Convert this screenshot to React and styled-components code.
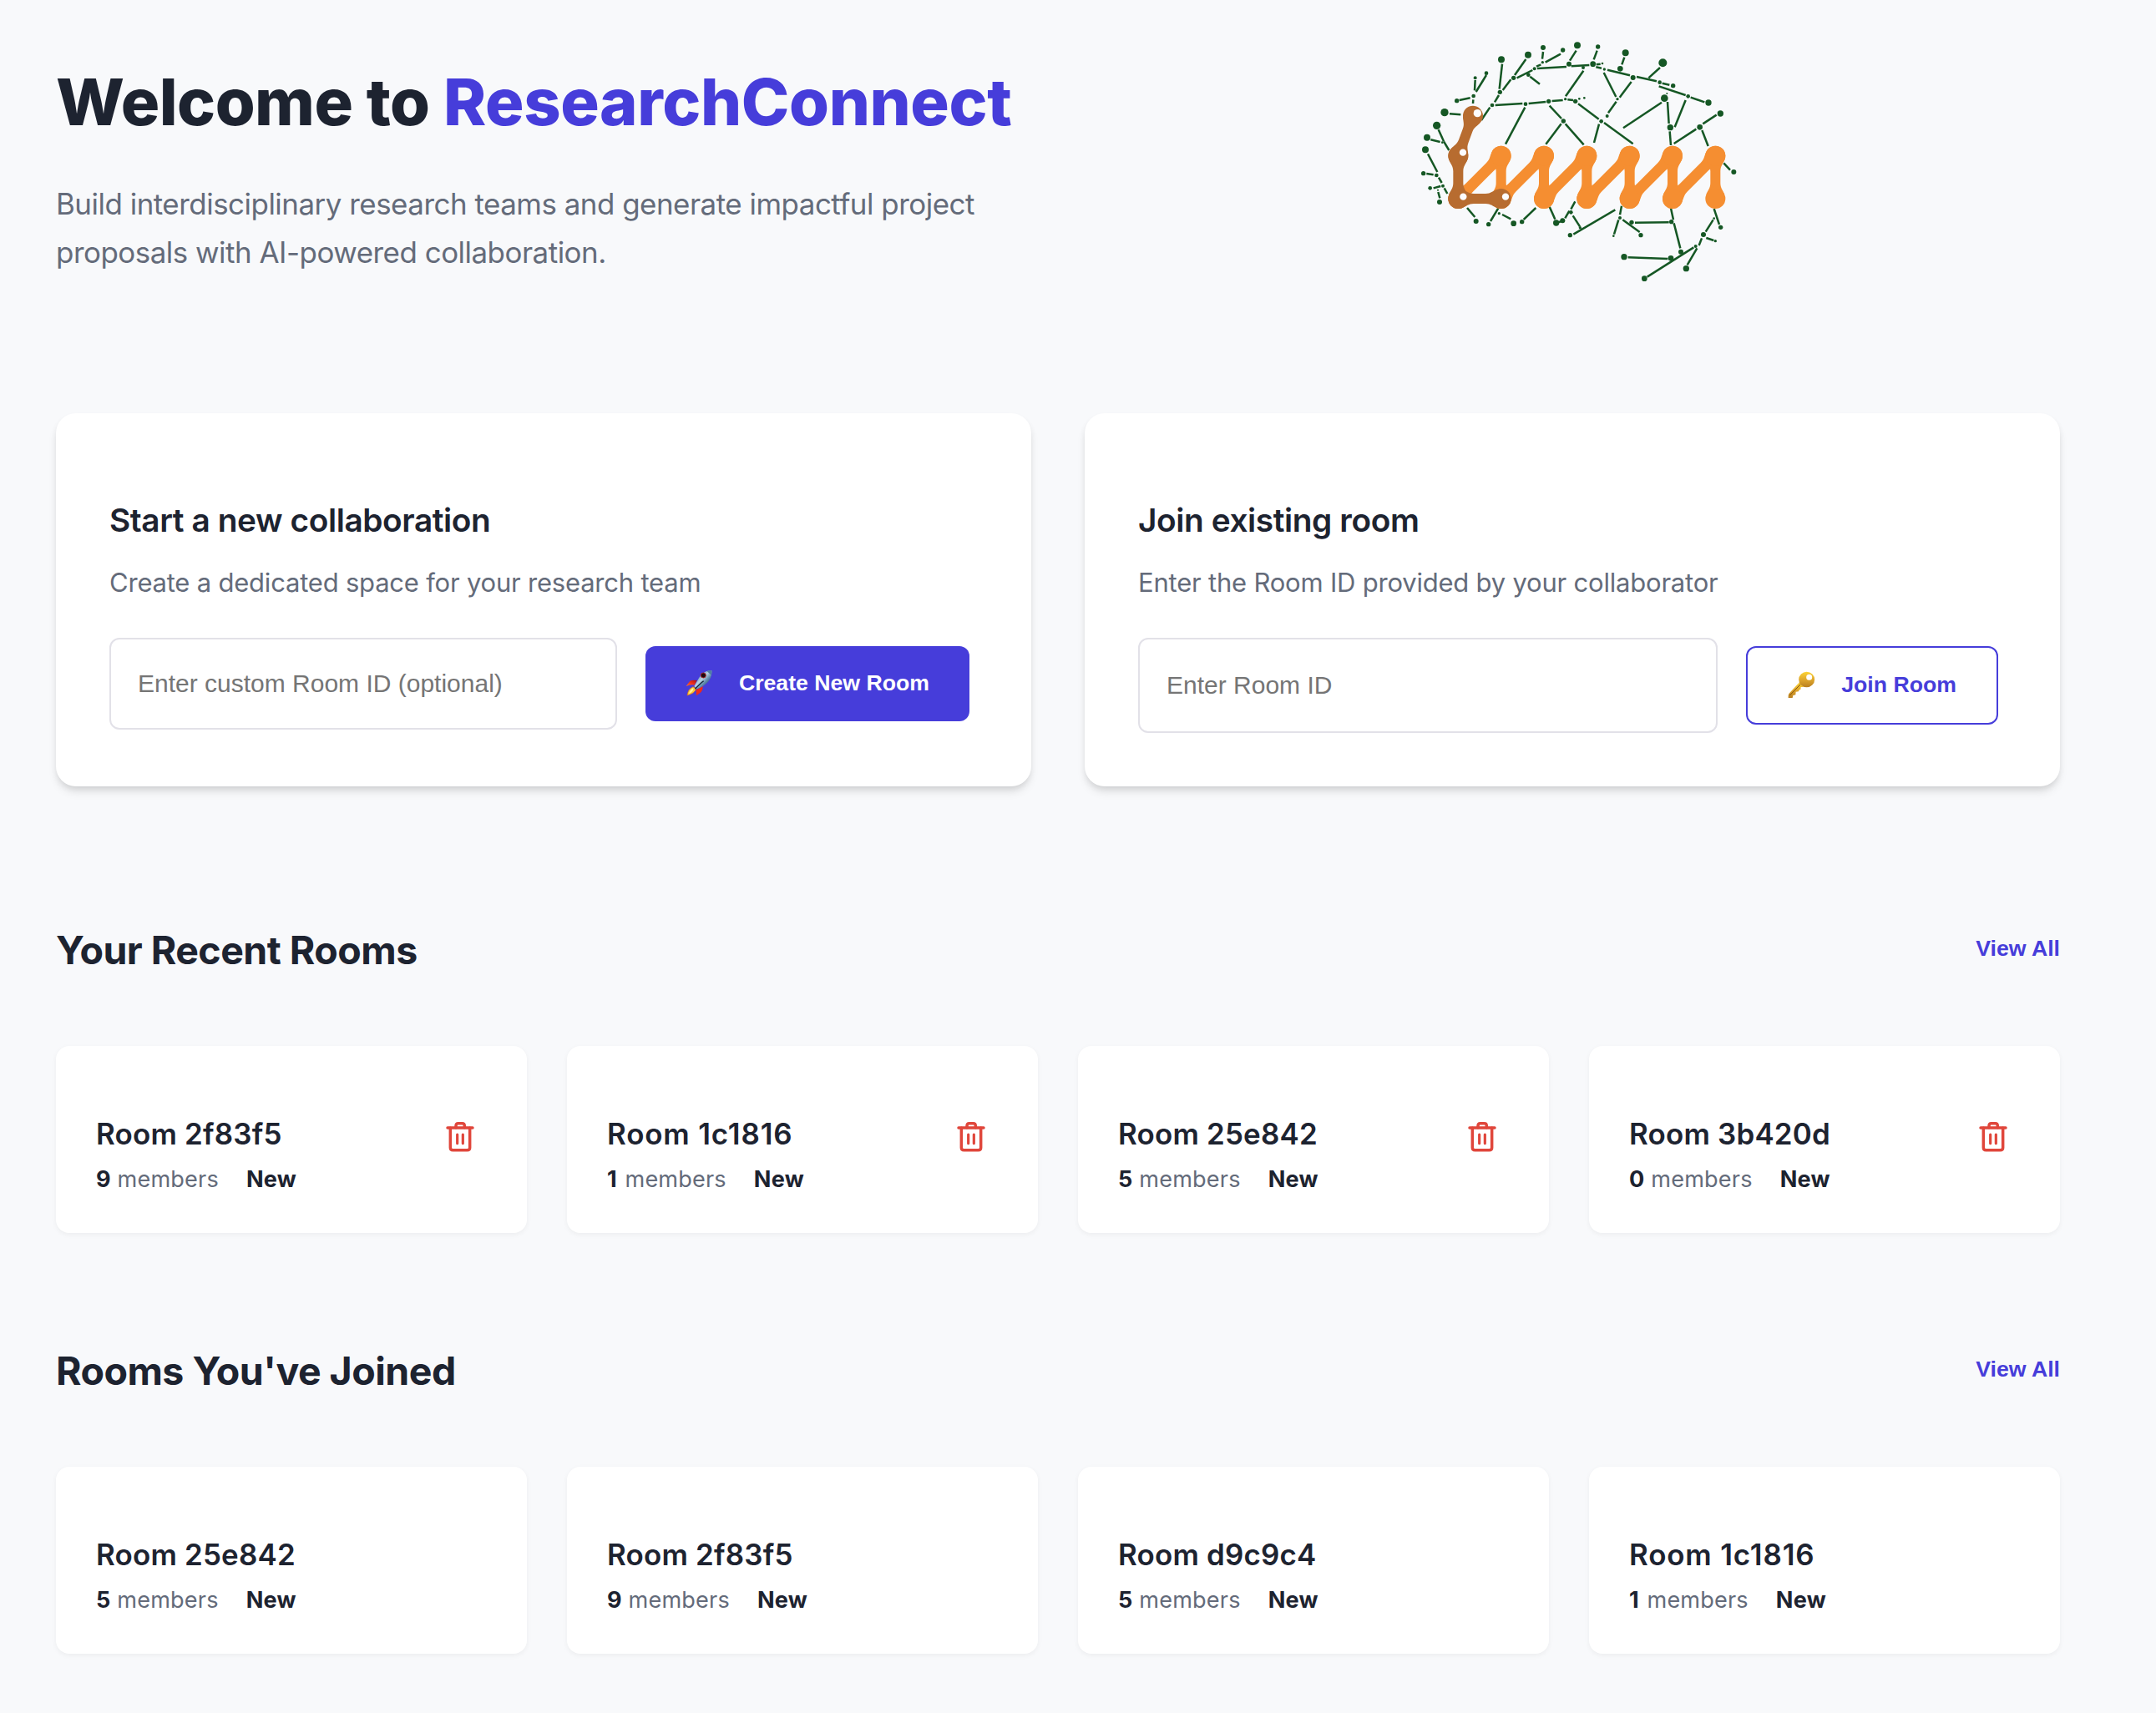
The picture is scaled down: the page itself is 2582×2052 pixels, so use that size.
import React from 'react';
import styled, { createGlobalStyle } from 'styled-components';

const color = {
  page: '#f8f9fb',
  card: '#ffffff',
  ink: '#1d2330',
  muted: '#646b7a',
  primary: '#463dda',
  border: '#e2e1e8',
  danger: '#e0463b',
  green: '#155724',
  orange: '#f58e31',
  brown: '#b76c30',
};

const GlobalStyle = createGlobalStyle`
  *, *::before, *::after { box-sizing: border-box; }
  body {
    margin: 0;
    background: ${color.page};
    color: ${color.ink};
    font-family: Inter, 'Noto Sans', sans-serif;
  }
  h1, h2, h3, p { margin: 0; }
`;

const Page = styled.main`
  width: 2582px;
  min-height: 2052px;
  padding: 0 115px 0 67px;
`;

const Hero = styled.header`
  display: grid;
  grid-template-columns: 1fr 1fr;
  column-gap: 64px;
  height: 495px;
`;

const HeroCopy = styled.div`
  padding-top: 74px;
`;

const Title = styled.h1`
  font-size: 77.5px;
  line-height: 96px;
  font-weight: 800;
  letter-spacing: -0.55px;
  white-space: nowrap;
`;

const Brand = styled.span`
  color: ${color.primary};
  letter-spacing: -0.4px;
`;

const Lead = styled.p`
  margin-top: 46px;
  max-width: 1168px;
  color: ${color.muted};
  font-size: 34.9px;
  line-height: 57.6px;
  letter-spacing: -0.48px;
`;

const HeroArt = styled.div`
  display: flex;
  justify-content: center;
  padding: 40px 0 0 14px;
`;

const Actions = styled.section`
  display: grid;
  grid-template-columns: 1fr 1fr;
  gap: 64px;
`;

const ActionCard = styled.article`
  height: 447px;
  padding: 104px 64px 0;
  border-radius: 24px;
  background: ${color.card};
  box-shadow: 0 8px 12px -2px rgba(0, 0, 0, 0.1), 0 4px 8px -2px rgba(0, 0, 0, 0.1);
`;

const CardTitle = styled.h2`
  font-size: 38.8px;
  line-height: 48px;
  font-weight: 600;
  letter-spacing: -0.41px;
`;

const CardText = styled.p`
  margin: 25px 0 41px;
  color: ${color.muted};
  font-size: 31px;
  line-height: 51px;
  letter-spacing: -0.21px;
`;

const Form = styled.form`
  display: flex;
  gap: 24px;
`;

const Input = styled.input`
  flex: 1;
  min-width: 0;
  padding: 0 32px 1px;
  border: 2px solid ${color.border};
  border-radius: 12px;
  background: ${color.card};
  color: ${color.ink};
  font: 30px 'Liberation Sans', Arial, sans-serif;
  outline: none;
  &::placeholder { color: #757575; opacity: 1; }
`;

const Button = styled.button`
  display: flex;
  align-items: center;
  justify-content: space-between;
  width: ${(p) => (p.$outline ? 302 : 388)}px;
  height: ${(p) => (p.$outline ? 94 : 90)}px;
  margin: 10px;
  padding: 0 48px 2px;
  border: ${(p) => (p.$outline ? `2px solid ${color.primary}` : 'none')};
  border-radius: 12px;
  background: ${(p) => (p.$outline ? 'transparent' : color.primary)};
  color: ${(p) => (p.$outline ? color.primary : '#ffffff')};
  font: bold 26.67px 'Liberation Sans', Arial, sans-serif;
  white-space: nowrap;
`;

const RoomsSection = styled.section`
  padding-top: ${(p) => p.$space}px;
`;

const SectionHeader = styled.div`
  display: flex;
  justify-content: space-between;
  align-items: flex-start;
  margin-bottom: 85px;
`;

const SectionTitle = styled.h2`
  font-size: 46.5px;
  line-height: 57px;
  height: 58px;
  font-weight: 700;
  letter-spacing: -0.52px;
`;

const ViewAll = styled.button`
  padding: 0;
  border: 0;
  background: none;
  color: ${color.primary};
  font: bold 26.67px/53px 'Liberation Sans', Arial, sans-serif;
`;

const RoomGrid = styled.div`
  display: grid;
  grid-template-columns: repeat(4, 1fr);
  gap: 48px;
`;

const RoomCard = styled.article`
  display: flex;
  justify-content: space-between;
  align-items: flex-start;
  height: 224px;
  padding: 85px 62px 0 48px;
  border-radius: 16px;
  background: ${color.card};
  box-shadow: 0 2px 6px rgba(0, 0, 0, 0.05);
`;

const RoomName = styled.h3`
  font-size: 34.9px;
  line-height: 41px;
  height: 42px;
  font-weight: 600;
  letter-spacing: ${(p) => (p.$loose ? 0.85 : 0.2)}px;
`;

const RoomMeta = styled.div`
  display: flex;
  gap: 33px;
  margin-top: 16px;
  color: ${color.muted};
  font-size: 27.1px;
  line-height: 34px;
  letter-spacing: 0.17px;
`;

const Strong = styled.strong`
  color: ${color.ink};
  font-weight: 700;
  letter-spacing: ${(p) => (p.$loose ? 2 : 0.2)}px;
`;

const DeleteButton = styled.button`
  display: flex;
  margin-top: 5px;
  padding: 0;
  border: 0;
  background: none;
  color: ${color.danger};
`;

/* Branch segments of the network: x1, y1, x2, y2 */
const branches = [
  [270, 150, 233, 210], [230, 168, 228, 205], [173, 240, 212, 232], [223, 238, 222, 252],
  [138, 289, 178, 292], [327, 110, 317, 200], [412, 93, 372, 150], [358, 166, 329, 204],
  [315, 222, 300, 247], [283, 266, 252, 312], [302, 258, 400, 252], [422, 252, 484, 246],
  [506, 243, 545, 240], [562, 238, 582, 240], [409, 266, 339, 398], [497, 260, 540, 306],
  [539, 325, 484, 398], [554, 325, 620, 400], [380, 160, 436, 132], [453, 126, 558, 120],
  [575, 118, 640, 114], [427, 155, 462, 182], [450, 119, 466, 112], [482, 104, 537, 74],
  [474, 66, 471, 92], [570, 98, 593, 62], [619, 134, 555, 226], [98, 346, 117, 388],
  [117, 388, 136, 420], [70, 382, 104, 390], [60, 433, 94, 498], [55, 504, 80, 508],
  [99, 518, 110, 537], [119, 556, 130, 576], [80, 556, 106, 549], [97, 570, 103, 592],
  [668, 62, 656, 94], [665, 112, 680, 110], [664, 121, 684, 125], [705, 131, 786, 151],
  [766, 86, 757, 112], [810, 156, 882, 172], [894, 123, 853, 160], [902, 179, 928, 185],
  [890, 190, 986, 222], [1004, 230, 1054, 247], [692, 141, 736, 228], [791, 174, 749, 230],
  [737, 245, 708, 286], [600, 253, 674, 308], [693, 321, 797, 397], [675, 326, 657, 393],
  [900, 248, 762, 340], [921, 246, 926, 324], [986, 240, 947, 337], [929, 352, 933, 402],
  [1024, 344, 944, 396], [1048, 325, 1097, 293], [1045, 348, 1067, 405], [1123, 466, 1146, 491],
  [201, 627, 229, 660], [313, 628, 285, 675], [327, 651, 358, 667], [448, 627, 404, 669],
  [497, 623, 517, 668], [528, 679, 540, 675], [553, 664, 568, 638], [574, 632, 589, 604],
  [581, 655, 606, 694], [583, 722, 733, 634], [756, 620, 750, 652], [745, 670, 729, 722],
  [760, 670, 821, 714], [804, 680, 926, 679], [933, 628, 942, 670], [944, 682, 967, 772],
  [1015, 769, 848, 875], [779, 805, 922, 810], [1027, 772, 992, 832], [1085, 670, 1058, 713],
  [1044, 736, 1034, 762], [1060, 735, 1087, 744], [1088, 630, 1107, 687],
];

/* Network nodes: cx, cy, r */
const nodes = [
  [324, 94, 12], [420, 77, 12], [474, 51, 9], [545, 60, 8], [567, 110, 9], [597, 43, 12],
  [472, 104, 5], [443, 127, 6], [421, 149, 7], [368, 160, 8], [319, 211, 8], [291, 258, 7],
  [411, 254, 7], [494, 244, 8], [554, 236, 5], [590, 244, 8], [547, 315, 8], [270, 143, 7],
  [230, 160, 6], [224, 225, 7], [164, 242, 8], [120, 284, 14], [92, 331, 14], [57, 374, 12],
  [112, 392, 4], [51, 418, 12], [44, 503, 8], [91, 510, 7], [114, 548, 6], [68, 556, 7],
  [96, 563, 3], [102, 606, 9], [671, 48, 8], [653, 110, 10], [618, 123, 6], [687, 108, 4],
  [694, 129, 5], [751, 127, 10], [770, 70, 12], [797, 159, 9], [904, 106, 15], [893, 176, 7],
  [941, 188, 8], [995, 226, 7], [1068, 249, 11], [919, 216, 3], [910, 233, 13], [931, 338, 11],
  [1037, 337, 10], [1111, 288, 11], [741, 236, 5], [704, 297, 6], [683, 316, 7], [622, 232, 4],
  [604, 235, 4], [1159, 498, 9], [233, 675, 9], [278, 686, 8], [316, 647, 5], [368, 683, 10],
  [398, 677, 8], [521, 681, 11], [544, 673, 9], [574, 643, 7], [607, 698, 5], [571, 725, 8],
  [750, 663, 6], [727, 728, 4], [792, 679, 8], [825, 725, 8], [935, 677, 8], [969, 785, 9],
  [765, 803, 11], [933, 808, 10], [838, 881, 10], [1022, 765, 6], [988, 845, 11],
  [1050, 723, 9], [1088, 665, 4], [1112, 697, 8], [1093, 746, 5],
];

const zigzagX = [323, 477, 631, 785, 939, 1093];

/* A link with a round knob at each end and flared shoulders */
function Bone({ from, to, half = 18, fill }) {
  const [x1, y1] = from;
  const [x2, y2] = to;
  const len = Math.hypot(x2 - x1, y2 - y1);
  const angle = (Math.atan2(y2 - y1, x2 - x1) * 180) / Math.PI;
  const d = [
    `M14 -33 C30 -28 36 ${-half} 56 ${-half}`,
    `H${len - 56} C${len - 36} ${-half} ${len - 30} -28 ${len - 14} -33`,
    `V33 C${len - 30} 28 ${len - 36} ${half} ${len - 56} ${half}`,
    `H56 C36 ${half} 30 28 14 33 Z`,
  ].join(' ');
  return (
    <g transform={`translate(${x1} ${y1}) rotate(${angle})`} fill={fill}>
      <path d={d} />
      <circle r="36" />
      <circle cx={len} r="36" />
    </g>
  );
}

function Logo() {
  return (
    <svg width="400" height="310" viewBox="0 0 1200 930" role="img" aria-label="ResearchConnect">
      <g stroke={color.green} strokeWidth="7.5">
        {branches.map(([x1, y1, x2, y2], i) => (
          <line key={i} x1={x1} y1={y1} x2={x2} y2={y2} />
        ))}
      </g>
      <g fill={color.green}>
        {nodes.map(([cx, cy, r], i) => (
          <circle key={i} cx={cx} cy={cy} r={r} />
        ))}
      </g>
      {zigzagX.map((x) => (
        <g key={x}>
          <Bone from={[x - 154, 594]} to={[x, 440]} half={19.5} fill={color.orange} />
          <Bone from={[x, 440]} to={[x, 594]} fill={color.orange} />
        </g>
      ))}
      <Bone from={[222, 296]} to={[169, 440]} fill={color.brown} />
      <Bone from={[169, 440]} to={[169, 594]} fill={color.brown} />
      <Bone from={[169, 594]} to={[323, 594]} fill={color.brown} />
      <g fill="#fcfcfe">
        <circle cx="238" cy="287" r="14" />
        <circle cx="186" cy="428" r="12.5" />
        <circle cx="187" cy="587" r="12.5" />
        <circle cx="339" cy="587" r="12.5" />
      </g>
    </svg>
  );
}

function Rocket() {
  return (
    <svg width="32" height="31" viewBox="63 40 96 93" aria-hidden="true">
      <defs>
        <linearGradient id="hull" x1="0" y1="0" x2="1" y2="1">
          <stop offset="0.2" stopColor="#4f83ab" />
          <stop offset="0.45" stopColor="#b9d3e2" />
          <stop offset="0.62" stopColor="#5f8cae" />
          <stop offset="0.85" stopColor="#1f3f63" />
        </linearGradient>
        <linearGradient id="fin" x1="0" y1="1" x2="1" y2="0">
          <stop offset="0" stopColor="#ff7a2a" />
          <stop offset="0.5" stopColor="#f0301c" />
          <stop offset="1" stopColor="#a8140f" />
        </linearGradient>
      </defs>
      <path d="M65 97 L79 78 Q88 73 104 76 L95 93 Q80 90 65 97Z" fill="url(#fin)" />
      <path d="M102 131 L101 110 L125 97 Q126 108 119 118Z" fill="#ee2a1b" />
      <path d="M69 130 Q72 106 90 99 L101 105 Q98 122 69 130Z" fill="#f7c93a" stroke="#d9661d" strokeWidth="2" />
      <path d="M75 124 Q79 109 91 104 Q93 115 75 124Z" fill="#fff3a0" />
      <path d="M157 41 C141 38 119 50 108 73 L94 97 L104 107 C132 97 160 76 157 41Z" fill="url(#hull)" />
      <path d="M128 78 Q115 88 97 107" fill="none" stroke="#12243a" strokeWidth="4" />
      <circle cx="127" cy="58" r="9" fill="#1a0b10" stroke="#a52427" strokeWidth="3" />
      <path d="M157 41 Q148 39 140 43 L155 57 Q158 49 157 41Z" fill="#4f7ea4" />
    </svg>
  );
}

function Key() {
  return (
    <svg width="33" height="33" viewBox="422 251 99 99" aria-hidden="true">
      <defs>
        <linearGradient id="gold" x1="0" y1="0" x2="0" y2="1">
          <stop offset="0" stopColor="#fcd536" />
          <stop offset="0.55" stopColor="#dca32c" />
          <stop offset="1" stopColor="#b97f20" />
        </linearGradient>
      </defs>
      <path
        d="M464 291 L426 332 Q423 337 424 347 H439 L441 338 L450 336 L451 325 L461 324 L463 318 L468 317 L469 308 L480 308Z"
        fill="url(#gold)"
      />
      <path d="M468 298 L429 338" stroke="#7c4d10" strokeWidth="3" />
      <path
        fillRule="evenodd"
        d="M490 253 a28.500 28 0 1 1 0 56 a28.500 28 0 1 1 0 -56Z M499 262 a10.500 10.500 0 1 0 0 21 a10.500 10.500 0 1 0 0 -21Z"
        fill="url(#gold)"
      />
    </svg>
  );
}

function Trash() {
  return (
    <svg
      width="36"
      height="38"
      viewBox="207 759 108 114"
      fill="none"
      stroke="currentColor"
      strokeLinecap="round"
      strokeLinejoin="round"
      aria-hidden="true"
    >
      <g strokeWidth="10.500">
        <path d="M216 783 H306" />
        <path d="M226 784 V854 Q226 863 235 863 H287 Q296 863 296 854 V784" />
        <path d="M246 782 V776 Q246 767 254 767 H269 Q277 767 277 776 V782" />
      </g>
      <path d="M251 807 V839 M271 807 V839" strokeWidth="9.500" />
    </svg>
  );
}

const recentRooms = [
  { id: '2f83f5', members: 9 },
  { id: '1c1816', members: 1 },
  { id: '25e842', members: 5 },
  { id: '3b420d', members: 0 },
];

const joinedRooms = [
  { id: '25e842', members: 5 },
  { id: '2f83f5', members: 9 },
  { id: 'd9c9c4', members: 5 },
  { id: '1c1816', members: 1 },
];

const hasOne = (value) => String(value).includes('1');

function Rooms({ title, rooms, space, removable }) {
  return (
    <RoomsSection $space={space}>
      <SectionHeader>
        <SectionTitle>{title}</SectionTitle>
        <ViewAll type="button">View All</ViewAll>
      </SectionHeader>
      <RoomGrid>
        {rooms.map((room) => (
          <RoomCard key={room.id}>
            <div>
              <RoomName $loose={hasOne(room.id)}>Room {room.id}</RoomName>
              <RoomMeta>
                <span><Strong $loose={hasOne(room.members)}>{room.members}</Strong> members</span>
                <Strong>New</Strong>
              </RoomMeta>
            </div>
            {removable && (
              <DeleteButton type="button" aria-label="Delete room">
                <Trash />
              </DeleteButton>
            )}
          </RoomCard>
        ))}
      </RoomGrid>
    </RoomsSection>
  );
}

export default function App() {
  return (
    <>
      <GlobalStyle />
      <Page>
        <Hero>
          <HeroCopy>
            <Title>Welcome to <Brand>ResearchConnect</Brand></Title>
            <Lead>
              Build interdisciplinary research teams and generate impactful project
              proposals with AI-powered collaboration.
            </Lead>
          </HeroCopy>
          <HeroArt>
            <Logo />
          </HeroArt>
        </Hero>
        <Actions>
          <ActionCard>
            <CardTitle>Start a new collaboration</CardTitle>
            <CardText>Create a dedicated space for your research team</CardText>
            <Form>
              <Input placeholder="Enter custom Room ID (optional)" />
              <Button type="button">
                <Rocket />
                Create New Room
              </Button>
            </Form>
          </ActionCard>
          <ActionCard>
            <CardTitle>Join existing room</CardTitle>
            <CardText>Enter the Room ID provided by your collaborator</CardText>
            <Form>
              <Input placeholder="Enter Room ID" />
              <Button type="button" $outline>
                <Key />
                Join Room
              </Button>
            </Form>
          </ActionCard>
        </Actions>
        <Rooms title="Your Recent Rooms" rooms={recentRooms} space={168} removable />
        <Rooms title="Rooms You've Joined" rooms={joinedRooms} space={137} />
      </Page>
    </>
  );
}
